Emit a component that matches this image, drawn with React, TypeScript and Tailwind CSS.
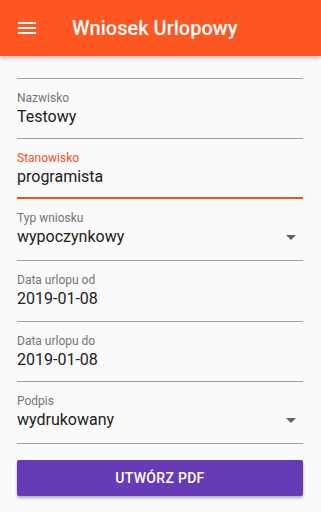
import * as React from 'react'

// Simple material-like form screen

function Field({ label, value, focused, select, pb = 'pb-[9px]' }: { label: string; value: string; focused?: boolean; select?: boolean; pb?: string }) {
  return (
    <div
      className={
        focused
          ? 'flex flex-col pt-[12px] pb-[8px] border-b-2 border-[#f4511e]'
          : `flex flex-col pt-[12px] ${pb} border-b border-[#9e9e9e]`
      }
    >
      <span className={focused ? 'text-[12px] leading-[14px] text-[#f4511e]' : 'text-[12px] leading-[14px] text-[#757575]'}>
        {label}
      </span>
      <div className="flex items-center justify-between h-[24px]">
        <span className="text-[16px] leading-[24px] text-[#212121]">{value}</span>
        {select && (
          <svg width="24" height="24" viewBox="0 0 24 24">
            <path d="M7 10l5 5 5-5z" fill="#616161" />
          </svg>
        )}
      </div>
    </div>
  )
}

export default function App() {
  return (
    <div className="w-[321px] h-[512px] bg-[#fafafa] overflow-hidden" style={{ fontFamily: 'Roboto, "Noto Sans", sans-serif' }}>
      <header className="h-14 bg-[#ff5722] flex items-center shadow-[0_2px_4px_rgba(0,0,0,0.25)] relative">
        <svg width="24" height="24" viewBox="0 0 24 24" className="ml-[15px]">
          <path d="M3 18h18v-2H3v2zm0-5h18v-2H3v2zm0-7v2h18V6H3z" fill="#ffffff" />
        </svg>
        <h1 className="ml-[33px] text-[20px] font-medium text-white">Wniosek Urlopowy</h1>
      </header>

      <main className="px-[17px] mr-[1px]">
        <div className="h-[23px] border-b border-[#9e9e9e]" />
        <Field label="Nazwisko" value="Testowy" />
        <Field label="Stanowisko" value="programista" focused />
        <Field label="Typ wniosku" value="wypoczynkowy" select pb="pb-[11px]" />
        <Field label="Data urlopu od" value="2019-01-08" pb="pb-[10px]" />
        <Field label="Data urlopu do" value="2019-01-08" pb="pb-[9px]" />
        <Field label="Podpis" value="wydrukowany" select pb="pb-[11px]" />

        <button className="mt-[16px] w-full h-[36px] rounded-[2px] bg-[#673ab7] text-white text-[14px] font-medium tracking-[0.3px] shadow-[0_2px_3px_rgba(0,0,0,0.3)]">
          UTWÓRZ PDF
        </button>
      </main>
    </div>
  )
}
